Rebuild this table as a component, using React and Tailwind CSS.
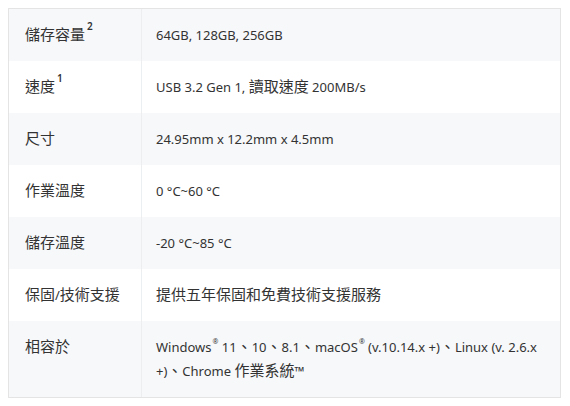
const CJK = /([\u3000-\u303f\u4e00-\u9fff\uff00-\uffef]+)/;

// CJK runs are rendered a bit larger than the latin text, like the source page
const Mixed = ({ text }) =>
  text.split(CJK).filter(Boolean).map((part, i) =>
    CJK.test(part) ? (
      <span key={i} className="text-[15px] leading-none font-['Noto_Sans_CJK_TC',sans-serif]">{part}</span>
    ) : (
      <span key={i}>{part}</span>
    )
  );

const Reg = () => <sup className="text-[7px] leading-none align-[5px] ml-[1px]">®</sup>;

const rows = [
  { label: "儲存容量", sup: "2", value: <Mixed text="64GB, 128GB, 256GB" /> },
  { label: "速度", sup: "1", value: <Mixed text="USB 3.2 Gen 1, 讀取速度 200MB/s" /> },
  { label: "尺寸", value: <Mixed text="24.95mm x 12.2mm x 4.5mm" /> },
  { label: "作業溫度", value: <Mixed text="0 °C~60 °C" /> },
  { label: "儲存溫度", value: <Mixed text="-20 °C~85 °C" /> },
  { label: "保固/技術支援", value: <Mixed text="提供五年保固和免費技術支援服務" /> },
  {
    label: "相容於",
    value: (
      <>
        <Mixed text="Windows" />
        <Reg />
        <Mixed text=" 11、10、8.1、macOS" />
        <Reg />
        <Mixed text=" (v.10.14.x +)、Linux (v. 2.6.x +)、Chrome 作業系統™" />
      </>
    ),
  },
];

export default function App() {
  return (
    <div className="w-[570px] h-[406px] bg-white pt-2 pl-2 font-['Noto_Sans','Noto_Sans_CJK_TC',sans-serif] text-[13px] leading-[24px] text-[#333]">
      <div className="w-[553px] border border-[#e4e4e4]">
        {rows.map((row, i) => (
          <div key={i} className={`flex ${i % 2 === 0 ? "bg-[#f7f8fa]" : "bg-white"}`}>
            <div className="w-[133px] shrink-0 border-r border-[#eceef0] pl-4 py-[14px]">
              <Mixed text={row.label} />
              {row.sup && <sup className="text-[10px] leading-none font-semibold align-[5px] ml-[2px]">{row.sup}</sup>}
            </div>
            <div className="flex-1 pl-[14px] pr-4 py-[14px]">{row.value}</div>
          </div>
        ))}
      </div>
    </div>
  );
}
